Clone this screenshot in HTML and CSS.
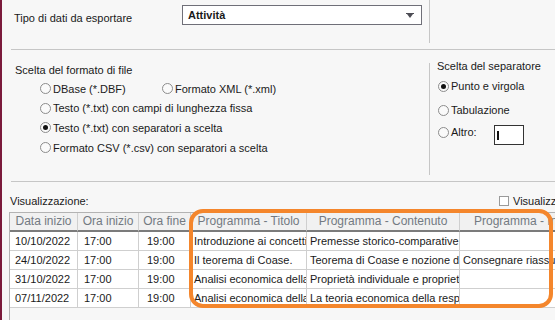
FILE: index.html
```html
<!DOCTYPE html>
<html lang="it">
<head>
  <meta charset="UTF-8">
  <meta name="viewport" content="width=device-width, initial-scale=1.0">
  <title>Esportazione dati</title>
  <link rel="stylesheet" href="styles.css">
</head>
<body>

  <div class="window">
    <div class="type-row">
      <div class="type-field">
        <label class="type-label">Tipo di dati da esportare</label>
        <div class="select">
          <span>Attività</span>
          <svg class="caret" width="8" height="5" viewBox="0 0 8 5"><path d="M0 0H8V1H0Z M1 1H7L4 5Z" fill="#4d4d55"/></svg>
        </div>
      </div>
      <div class="type-side"></div>
    </div>

    <div class="rule"></div>

    <div class="options">
      <div class="format">
        <div class="group-title">Scelta del formato di file</div>
        <div class="radio-list">
          <div class="radio-row">
            <label class="radio radio-wide"><span class="dot"></span>DBase (*.DBF)</label>
            <label class="radio"><span class="dot"></span>Formato XML (*.xml)</label>
          </div>
          <div class="radio-row">
            <label class="radio"><span class="dot"></span>Testo (*.txt) con campi di lunghezza fissa</label>
          </div>
          <div class="radio-row">
            <label class="radio"><span class="dot on"></span>Testo (*.txt) con separatori a scelta</label>
          </div>
          <div class="radio-row">
            <label class="radio"><span class="dot"></span>Formato CSV (*.csv) con separatori a scelta</label>
          </div>
        </div>
      </div>

      <div class="separator">
        <div class="group-title sep-title">Scelta del separatore</div>
        <div class="sep-radio first"><span class="dot on"></span>Punto e virgola</div>
        <div class="sep-radio second"><span class="dot"></span>Tabulazione</div>
        <div class="sep-radio third">
          <span class="dot"></span><span class="other-label">Altro:</span>
          <span class="other-input"><span class="cursor"></span></span>
        </div>
      </div>
    </div>

    <div class="rule"></div>

    <div class="preview">
      <div class="preview-head">
        <span class="preview-title">Visualizzazione:</span>
        <label class="check"><span class="check-box"></span>Visualizza tutte le colonne</label>
      </div>

      <div class="grid-wrap">
        <div class="grid">
          <div class="th">Data inizio</div>
          <div class="th">Ora inizio</div>
          <div class="th">Ora fine</div>
          <div class="th">Programma - Titolo</div>
          <div class="th">Programma - Contenuto</div>
          <div class="th">Programma - Indicazioni</div>

          <div class="td c1">10/10/2022</div>
          <div class="td c2">17:00</div>
          <div class="td c3">19:00</div>
          <div class="td">Introduzione ai concetti fondamentali</div>
          <div class="td">Premesse storico-comparative e metodologiche</div>
          <div class="td"></div>

          <div class="td c1">24/10/2022</div>
          <div class="td c2">17:00</div>
          <div class="td c3">19:00</div>
          <div class="td">Il teorema di Coase.</div>
          <div class="td">Teorema di Coase e nozione di costi di transazione</div>
          <div class="td">Consegnare riassunto del capitolo</div>

          <div class="td c1">31/10/2022</div>
          <div class="td c2">17:00</div>
          <div class="td c3">19:00</div>
          <div class="td">Analisi economica della proprietà</div>
          <div class="td">Proprietà individuale e proprietà collettiva</div>
          <div class="td"></div>

          <div class="td c1">07/11/2022</div>
          <div class="td c2">17:00</div>
          <div class="td c3">19:00</div>
          <div class="td">Analisi economica della responsabilità</div>
          <div class="td">La teoria economica della responsabilità civile</div>
          <div class="td"></div>
        </div>
        <div class="highlight"></div>
      </div>
    </div>
  </div>

</body>
</html>
```

FILE: styles.css
```css
body {
  margin: 0;
  font-family: "Liberation Sans", Arial, sans-serif;
  font-size: 11px;
  color: #1a1a1a;
  background-color: #f7f7f7;
  overflow: hidden;
}
.window {
  height: 320px;
  width: 555px;
  box-sizing: border-box;
  border-left: 2px solid #7b1a3b;
  display: flex;
  flex-direction: column;
}

/* top row */
.type-row {
  display: flex;
  height: 49px;
  flex-shrink: 0;
}
.type-field {
  width: 427px;
  box-sizing: border-box;
  padding-left: 12px;
  display: flex;
  align-items: flex-start;
}
.type-label {
  width: 168px;
  margin-top: 11px;
  line-height: 14px;
}
.select {
  margin-top: 5px;
  width: 240px;
  height: 20px;
  box-sizing: border-box;
  border: 1px solid #6f6f78;
  background: white;
  padding: 0 7px 0 5px;
  display: flex;
  align-items: center;
  justify-content: space-between;
  font-weight: bold;
  line-height: 18px;
}
.type-side {
  height: 43px;
  border-left: 1px solid #c6c6c6;
}
.rule {
  height: 1px;
  flex-shrink: 0;
  margin-left: 9px;
  background-color: #c6c6c6;
}

/* radio options */
.options {
  display: flex;
  height: 131px;
  flex-shrink: 0;
}
.format {
  width: 427px;
  box-sizing: border-box;
  padding: 13px 0 0 13px;
}
.group-title {
  line-height: 14px;
}
.radio-list {
  padding: 2px 0 0 25px;
}
.radio-row {
  display: flex;
  align-items: center;
  height: 19.6px;
}
.radio {
  display: flex;
  align-items: center;
  line-height: 14px;
}
.radio-wide {
  width: 122px;
}
.dot {
  width: 11px;
  height: 11px;
  box-sizing: border-box;
  border: 1px solid #8c8c8c;
  border-radius: 50%;
  background: #fafafa;
  margin-right: 2px;
  display: flex;
  align-items: center;
  justify-content: center;
  flex-shrink: 0;
}
.dot.on::after {
  content: "";
  width: 5px;
  height: 5px;
  border-radius: 50%;
  background: #111;
}
.separator {
  margin-top: 13px;
  height: 112px;
  border-left: 1px solid #c6c6c6;
  padding-left: 7px;
}
.sep-title {
  margin-top: -4px;
}
.sep-radio {
  display: flex;
  align-items: flex-start;
  line-height: 14px;
  margin-left: 1px;
}
.sep-radio .dot {
  margin-top: 1.5px;
}
.sep-radio.first {
  margin-top: 6px;
}
.sep-radio.second {
  margin-top: 10px;
}
.sep-radio.third {
  margin-top: 8px;
}
.other-label {
  width: 43px;
}
.other-input {
  width: 30px;
  height: 20px;
  box-sizing: border-box;
  border: 1px solid #333;
  background: white;
  padding-left: 2px;
  display: flex;
  align-items: center;
}
.cursor {
  width: 2px;
  height: 9px;
  background: #111;
}

/* preview table */
.preview {
  flex: 1;
  display: flex;
  flex-direction: column;
  min-height: 0;
}
.preview-head {
  display: flex;
  align-items: center;
  height: 14px;
  padding: 12px 0 0 8px;
  line-height: 14px;
  white-space: nowrap;
}
.preview-title {
  width: 489px;
  flex-shrink: 0;
}
.check {
  display: flex;
  align-items: center;
}
.check-box {
  width: 10px;
  height: 10px;
  box-sizing: border-box;
  border: 1px solid #9a9a9a;
  background: white;
  margin-right: 4px;
}
.grid-wrap {
  position: relative;
  flex: 1;
  margin: 4px 0 0 7px;
  border-left: 1px solid #b3b3b3;
  border-top: 1px solid #b3b3b3;
}
.grid {
  display: grid;
  grid-template-columns: 68px 61px 52px 116px 153px 159px;
  width: max-content;
}
.th, .td {
  box-sizing: border-box;
  height: 19px;
  white-space: nowrap;
  overflow: hidden;
  border-right: 1px solid #cfcfcf;
}
.th {
  border-bottom: 2px solid #7b7b7b;
  background: #f1f1f1;
  color: #737a82;
  font-size: 12px;
  line-height: 17px;
  text-align: center;
}
.td {
  border-bottom: 1px solid #cfcfcf;
  background: white;
  padding: 0 3px;
  line-height: 18px;
}
.td.c1 {
  padding-left: 5px;
}
.td.c2 {
  padding-left: 6px;
}
.td.c3 {
  padding-left: 8px;
}
.highlight {
  position: absolute;
  left: 179px;
  top: -4px;
  width: 364px;
  height: 99px;
  box-sizing: border-box;
  border: 4px solid #f4862c;
  border-radius: 14px;
  pointer-events: none;
}
```
